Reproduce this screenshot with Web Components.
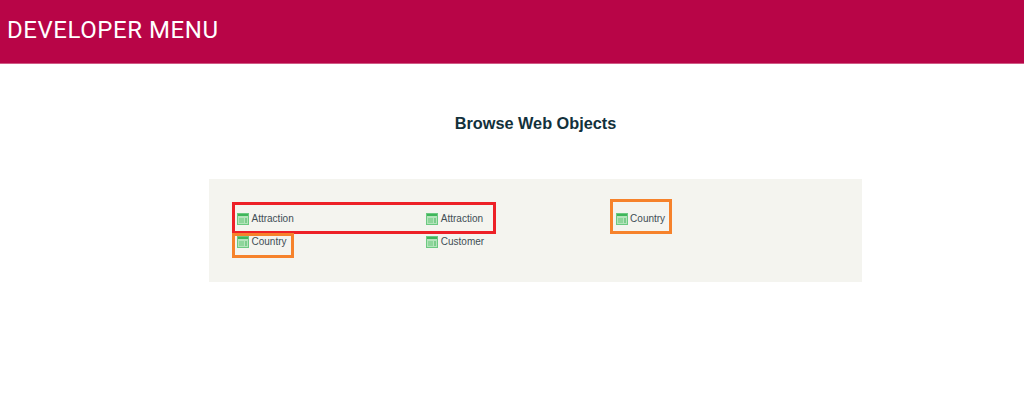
<!DOCTYPE html>
<html><head><meta charset="utf-8"><style>
html,body{margin:0;padding:0;background:#fff}
body{width:1024px;height:401px;overflow:hidden;font-family:"Liberation Sans",Arial,sans-serif}
</style></head><body>
<template id="t-bar"><style>
:host{display:flex;align-items:center;background:#b80547;border-bottom:1px solid #cf5a85;padding:0 0 4px 7px;box-sizing:border-box;height:64px;color:#fff;font:400 24px/1 "Roboto","Liberation Sans",sans-serif;letter-spacing:.55px}
</style><slot></slot></template>
<template id="t-heading"><style>
:host{display:block;text-align:center;margin:50px 0 46px 47px;font:bold 16.3px/19px "Liberation Sans",Arial,sans-serif;color:#12313b}
</style><slot></slot></template>
<template id="t-panel"><style>
:host{display:block;position:relative;box-sizing:border-box;width:653px;height:103px;margin-left:209px;background:#f4f4ef;padding:28px 0 0 28px}
.g{display:grid;grid-template-columns:189.3px 189.3px 189.3px;grid-auto-rows:23.5px}
</style><div class="g"><slot></slot></div><slot name="marks"></slot></template>
<template id="t-item"><style>
:host{display:flex;align-items:center;gap:2.5px;font:10px/24px "Liberation Sans",Arial,sans-serif;color:#414e55}
svg{flex:none;width:12px;height:12px;display:block}
</style><svg viewBox="0 0 12 12"><rect width="12" height="12" fill="#b4e4bb"/><rect width="12" height="3" fill="#3fb65a"/><rect x="2" y="5" width="5" height="5" fill="#8ed69b"/><rect x="8" y="5" width="2" height="5" fill="#7ccd8c"/><rect x=".5" y=".5" width="11" height="11" fill="none" stroke="#6cc981"/></svg><slot></slot></template>
<template id="t-mark"><style>
:host{display:block;position:absolute;box-sizing:border-box;border:3px solid var(--c);left:var(--x);top:var(--y);width:var(--w);height:var(--h)}
</style></template>
<dev-bar>DEVELOPER MENU</dev-bar>
<dev-heading>Browse Web Objects</dev-heading>
<dev-panel>
<dev-item>Attraction</dev-item><dev-item>Attraction</dev-item><dev-item>Country</dev-item>
<dev-item>Country</dev-item><dev-item>Customer</dev-item>
<dev-mark slot="marks" style="--c:#ed2027;--x:23px;--y:23px;--w:264px;--h:32px"></dev-mark>
<dev-mark slot="marks" style="--c:#f6822b;--x:23px;--y:54px;--w:62px;--h:25px"></dev-mark>
<dev-mark slot="marks" style="--c:#f6822b;--x:401px;--y:20px;--w:62px;--h:35px"></dev-mark>
</dev-panel>
<script>
for (const [name,id] of [['dev-bar','t-bar'],['dev-heading','t-heading'],['dev-panel','t-panel'],['dev-item','t-item'],['dev-mark','t-mark']]) {
  customElements.define(name, class extends HTMLElement {
    constructor(){super();this.attachShadow({mode:'open'}).appendChild(document.getElementById(id).content.cloneNode(true));}
  });
}
</script>
</body></html>
